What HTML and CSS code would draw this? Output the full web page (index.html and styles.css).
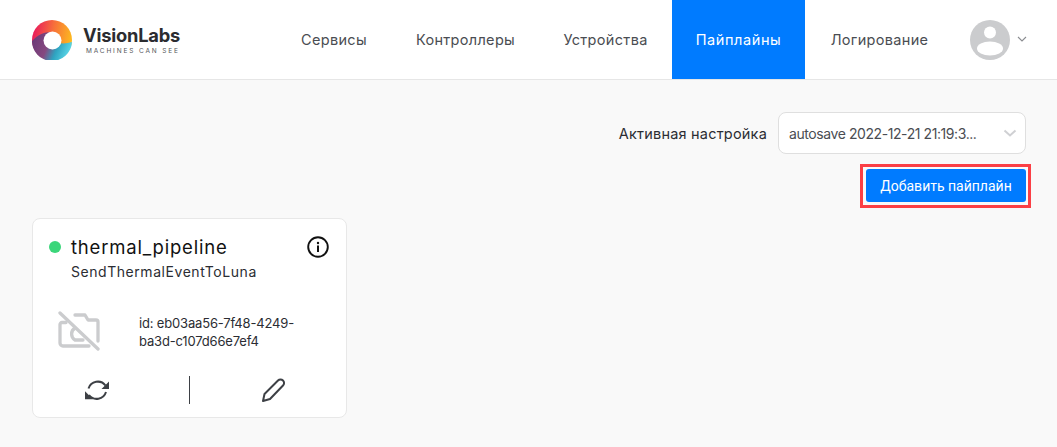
FILE: index.html
```html
<!DOCTYPE html>
<html lang="ru">
<head>
<meta charset="utf-8">
<title>Пайплайны</title>
<link rel="stylesheet" href="styles.css">
</head>
<body>
<header class="topbar">
  <div class="brand">
    <svg class="brand-mark" viewBox="0 0 40 40" width="40" height="40">
      <defs>
        <linearGradient id="gTop" x1="0" y1="0.3" x2="1" y2="0.5">
          <stop offset="0" stop-color="#e8175d"/><stop offset="0.5" stop-color="#f7703a"/><stop offset="1" stop-color="#fdbb1e"/>
        </linearGradient>
        <linearGradient id="gBot" x1="0" y1="0.3" x2="1" y2="0.6">
          <stop offset="0" stop-color="#6b3a78"/><stop offset="0.4" stop-color="#86487f"/><stop offset="0.65" stop-color="#2ea3c0"/><stop offset="1" stop-color="#5fdcec"/>
        </linearGradient>
      </defs>
      <circle cx="20" cy="20" r="20" fill="url(#gTop)"/>
      <path d="M0 21C6 15 11 12 20 12 C15 21 28 26 40 22 A20 20 0 0 1 0 20Z" fill="url(#gBot)"/>
      <circle cx="20.500" cy="20.500" r="9" fill="#fff"/>
    </svg>
    <div class="brand-text">
      <div class="brand-name">VisionLabs</div>
      <div class="brand-tag">MACHINES CAN SEE</div>
    </div>
  </div>
  <nav class="nav">
    <a class="nav-item">Сервисы</a>
    <a class="nav-item">Контроллеры</a>
    <a class="nav-item">Устройства</a>
    <a class="nav-item active">Пайплайны</a>
    <a class="nav-item">Логирование</a>
  </nav>
  <div class="user">
    <svg viewBox="0 0 40 40" width="40" height="40">
      <circle cx="20" cy="20" r="20" fill="#cbccce"/>
      <circle cx="20" cy="12.500" r="6" fill="#fff"/>
      <ellipse cx="20" cy="28.500" rx="13" ry="7" fill="#fff"/>
    </svg>
    <svg class="user-caret" viewBox="0 0 10 6" width="10" height="6">
      <path d="M1 1l4 4 4-4" fill="none" stroke="#8a8c90" stroke-width="1.100"/>
    </svg>
  </div>
</header>
<main class="content">
  <div class="setting-row">
    <span class="setting-label">Активная настройка</span>
    <div class="select">
      <span class="select-value">autosave 2022-12-21 21:19:3...</span>
      <svg viewBox="0 0 14 8" width="14" height="8">
        <path d="M1.500 1.500L7 6.500l5.500-5" fill="none" stroke="#cfd0d3" stroke-width="2"/>
      </svg>
    </div>
  </div>
  <div class="action-row">
    <div class="highlight">
      <button class="btn-primary">Добавить пайплайн</button>
    </div>
  </div>
  <section class="card">
    <div class="card-head">
      <span class="status-dot"></span>
      <div class="card-name">thermal_pipeline</div>
      <svg class="info" viewBox="0 0 22 22" width="22" height="22">
        <circle cx="11" cy="11" r="9.800" fill="none" stroke="#111" stroke-width="1.900"/>
        <circle cx="11" cy="7" r="1.200" fill="#111"/>
        <rect x="10" y="9.500" width="2" height="6.500" fill="#111"/>
      </svg>
    </div>
    <div class="card-sub">SendThermalEventToLuna</div>
    <div class="card-body">
      <svg class="no-cam" viewBox="0 0 42 41" width="42" height="41">
        <g fill="none" stroke="#cbccce" stroke-width="3.300" stroke-linecap="round" stroke-linejoin="round">
          <path d="M2 2L40 38"/>
          <path d="M8 11.500H4a2 2 0 0 0-2 2V32a3 3 0 0 0 3 3H31"/>
          <path d="M17 4h10l3 5h8a2 2 0 0 1 2 2V30"/>
          <path d="M17 17a7 7 0 0 0 0 12h8"/>
        </g>
      </svg>
      <div class="card-id">id: eb03aa56-7f48-4249-ba3d-c107d66e7ef4</div>
    </div>
    <div class="card-actions">
      <div class="action">
        <svg viewBox="0 0 24 24" width="24" height="24">
          <g fill="none" stroke="#3d4045" stroke-width="2">
            <path d="M3.500 10.500A9.700 9.700 0 0 1 20.500 7.500"/>
            <path d="M21 14A9.700 9.700 0 0 1 4 17"/>
          </g>
          <path d="M24.500 3v8h-8zM0 13.300v8h8z" fill="#3d4045"/>
        </svg>
      </div>
      <div class="divider"></div>
      <div class="action">
        <svg viewBox="0 0 24 24" width="24" height="24">
          <path d="M1 23L2.500 16L16 2.500a3.500 3.500 0 0 1 5 0a3.500 3.500 0 0 1 0 5L8 21Z" fill="none" stroke="#3d4045" stroke-width="2" stroke-linejoin="round"/>
        </svg>
      </div>
    </div>
  </section>
</main>
</body>
</html>
```
FILE: styles.css
```css
* { box-sizing: border-box; }
html, body { margin: 0; height: 100%; }
body {
  background: #f9f9f9;
  font-family: "Inter", "Noto Sans", sans-serif;
  color: #1f2126;
  overflow: hidden;
}
.topbar {
  display: flex;
  align-items: stretch;
  height: 80px;
  background: #fff;
  border-bottom: 1px solid #e6e6e6;
  padding-left: 32px;
}
.brand { display: flex; align-items: center; gap: 11px; width: 245px; }
.brand-mark { flex: none; }
.brand-name { font-size: 18.300px; font-weight: 700; line-height: 20px; letter-spacing: -0.2px; color: #2b2c30; }
.brand-tag { margin: 2px 0 0 3px; font-size: 6.500px; font-weight: 400; line-height: 8px; letter-spacing: 1.850px; color: #55575c; white-space: nowrap; }
.nav {
  display: grid;
  grid-template-columns: 114px 147px 131px 133px 147px;
  gap: 1px;
  height: 79px;
}
.nav-item {
  display: flex;
  align-items: center;
  justify-content: center;
  font-size: 14.500px;
  letter-spacing: 0.32px;
  color: #4a4d52;
  white-space: nowrap;
}
.nav-item.active { background: #007bff; color: #fff; letter-spacing: 0.6px; }
.user { display: flex; align-items: center; gap: 7px; margin-left: 17px; }
.user-caret { margin-top: -1px; }
.content { padding: 32px 31px 0 32px; }
.setting-row { display: flex; justify-content: flex-end; align-items: center; gap: 11px; }
.setting-label { font-size: 14.500px; letter-spacing: 0.2px; color: #2b2d33; }
.select {
  display: flex;
  align-items: center;
  justify-content: space-between;
  width: 248px;
  height: 42px;
  padding: 0 8px 0 10px;
  background: #fff;
  border: 1px solid #dfdfdf;
  border-radius: 8px;
  font-size: 14px;
  letter-spacing: -0.42px;
  color: #4a4d52;
}
.select-value { white-space: nowrap; }
.action-row { display: flex; justify-content: flex-end; margin-top: 10px; margin-right: -5px; }
.highlight { border: 3px solid #fb3f45; padding: 2px 2px 3px 3px; }
.btn-primary {
  display: block;
  width: 160px;
  height: 33px;
  border: 0;
  border-radius: 3px;
  background: #007bff;
  color: #fff;
  font-family: "Roboto", "Liberation Sans", sans-serif;
  font-size: 14px;
}
.card {
  width: 315px;
  height: 200px;
  margin-top: 10px;
  background: #fff;
  border: 1px solid #e8e8e8;
  border-radius: 8px;
  padding: 16px 16px 0 16px;
}
.card-head { display: flex; align-items: center; height: 24px; }
.status-dot { width: 12px; height: 12px; border-radius: 50%; background: #3bd67a; margin-right: 10px; }
.card-name { flex: 1; font-size: 18.500px; font-weight: 400; letter-spacing: 0.8px; color: #111; }
.info { margin-right: 1px; }
.card-sub { margin-left: 22px; margin-top: 5px; font-size: 14px; letter-spacing: 0.55px; line-height: 16px; color: #2b2d33; }
.card-body { display: flex; align-items: center; margin-top: 31px; padding-left: 9px; }
.no-cam { flex: none; }
.card-id { margin-left: 39px; width: 180px; font-size: 13px; letter-spacing: -0.17px; line-height: 18px; color: #2b2d33; }
.card-actions { display: flex; align-items: center; margin-top: 24px; margin-left: 36px; }
.action { display: flex; }
.divider { width: 1px; height: 28px; margin: 0 72px 0 80px; background: #3d4045; }
```
